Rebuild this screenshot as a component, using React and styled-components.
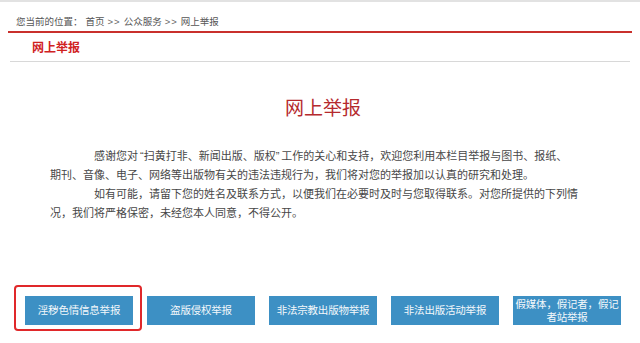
import React from "react";
import styled, { createGlobalStyle } from "styled-components";

const Global = createGlobalStyle`
  html, body { margin: 0; padding: 0; background: #fff; }
  body { font-family: "Liberation Sans", "Noto Sans CJK SC", sans-serif; color: #444; }
`;

const Page = styled.div`
  width: 640px;
  height: 343px;
  overflow: hidden;
  border-top: 2px solid #e2e2e2;
  box-sizing: border-box;
`;

const Breadcrumb = styled.div`
  margin: 0 8px;
  padding: 13px 0 0 8px;
  height: 16px;
  border-bottom: 2px solid #c9302c;
  font-size: 9.5px;
  line-height: 13px;
  color: #555;
  display: flex;
  gap: 3px;
`;

const Crumb = styled.span`
  color: #555;
`;

const Sep = styled.span`
  color: #666;
  letter-spacing: 1px;
`;

const SectionHead = styled.div`
  margin: 0 10px;
  padding-left: 22px;
  height: 28px;
  line-height: 30px;
  border-bottom: 1px solid #d8d8d8;
  font-size: 12px;
  font-weight: bold;
  color: #d0221f;
`;

const Title = styled.h1`
  margin: 36px 0 0 6px;
  text-align: center;
  font-size: 19px;
  line-height: 22px;
  font-weight: normal;
  color: #b52a2e;
`;

const Body = styled.div`
  width: 496px;
  margin: 27px auto 0;
  font-size: 11px;
  line-height: 19px;
  color: #474747;
`;

const Para = styled.p`
  margin: 0;
  text-indent: 2em;
  white-space: nowrap;
`;

const Wrapped = styled.span`
  margin-left: -2em;
`;

const Quote = styled.span`
  margin: ${(p) => (p.$open ? "0 0 0 2px" : "0 2px 0 0")};
`;

const ButtonRow = styled.div`
  display: flex;
  gap: 14px;
  margin: 73px 0 0 25px;
`;

const Cell = styled.div`
  position: relative;
`;

const Highlight = styled.div`
  position: absolute;
  left: -11px;
  right: -9px;
  top: -11px;
  bottom: -6px;
  border: 2px solid #e0282a;
  border-radius: 4px;
`;

const ReportButton = styled.a`
  width: 108px;
  height: 29px;
  box-sizing: border-box;
  padding: 0;
  display: flex;
  align-items: center;
  justify-content: center;
  text-align: center;
  background: #3d90c4;
  color: #f4f8fb;
  font-size: 10.5px;
  line-height: 13px;
  letter-spacing: -0.2px;
  text-decoration: none;
`;

const buttons = [
  "淫秽色情信息举报",
  "盗版侵权举报",
  "非法宗教出版物举报",
  "非法出版活动举报",
  "假媒体，假记者，假记者站举报",
];

export default function App() {
  return (
    <>
      <Global />
      <Page>
        <Breadcrumb>
          <Crumb>您当前的位置：</Crumb>
          <Crumb>首页</Crumb>
          <Sep>&gt;&gt;</Sep>
          <Crumb>公众服务</Crumb>
          <Sep>&gt;&gt;</Sep>
          <Crumb>网上举报</Crumb>
        </Breadcrumb>
        <SectionHead>网上举报</SectionHead>
        <Title>网上举报</Title>
        <Body>
          <Para>
            感谢您对<Quote $open>“</Quote>扫黄打非、新闻出版、版权<Quote>”</Quote>工作的关心和支持，欢迎您利用本栏目举报与图书、报纸、
            <br />
            <Wrapped>
              期刊、音像、电子、网络等出版物有关的违法违规行为，我们将对您的举报加以认真的研究和处理。
            </Wrapped>
          </Para>
          <Para>
            如有可能，请留下您的姓名及联系方式，以便我们在必要时及时与您取得联系。对您所提供的下列情
            <br />
            <Wrapped>况，我们将严格保密，未经您本人同意，不得公开。</Wrapped>
          </Para>
        </Body>
        <ButtonRow>
          {buttons.map((b, i) => (
            <Cell key={b}>
              {i === 0 && <Highlight />}
              <ReportButton href="#">{b}</ReportButton>
            </Cell>
          ))}
        </ButtonRow>
      </Page>
    </>
  );
}
